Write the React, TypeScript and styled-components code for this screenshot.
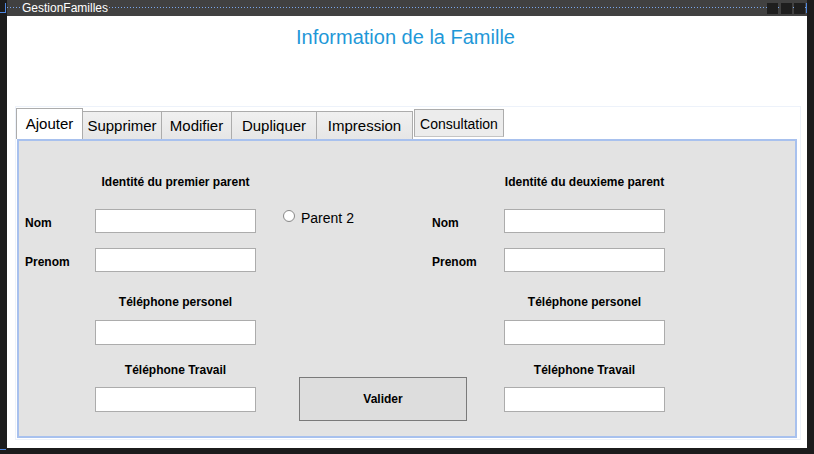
import React from 'react';
import styled, { createGlobalStyle, css } from 'styled-components';

const GlobalStyle = createGlobalStyle`
  html, body {
    margin: 0;
    padding: 0;
    background: #1c1c1c;
  }
  body {
    font-family: "Liberation Sans", Arial, sans-serif;
  }
`;

const Window = styled.div`
  display: flex;
  width: 814px;
  height: 454px;
  background: #1c1c1c;
  overflow: hidden;
`;

const SideStrip = styled.div`
  width: 7px;
  flex: none;
  display: flex;
  flex-direction: column;
  justify-content: space-between;
`;

const CornerMark = styled.div`
  width: 6px;
  height: 10px;
  margin-top: 3px;
  box-sizing: border-box;
  border-right: 1px solid #4f86dd;
  border-bottom: 1px solid #4f86dd;
`;

const BottomMark = styled.div`
  width: 6px;
  height: 1px;
  margin-bottom: 4px;
  background: #4f86dd;
`;

const Center = styled.div`
  width: 800px;
  flex: none;
  display: flex;
  flex-direction: column;
`;

const TitleBar = styled.div`
  height: 16px;
  flex: none;
  display: flex;
  align-items: center;
  background-color: #414141;
  background-image: linear-gradient(to right, #7aa7ec 50%, transparent 50%);
  background-size: 3px 1px;
  background-position: 0 7px;
  background-repeat: repeat-x;
`;

const Caption = styled.span`
  margin-left: 14px;
  padding: 0 1px;
  background: #414141;
  color: #ffffff;
  font-size: 12px;
  line-height: 16px;
`;

const WinButtons = styled.div`
  margin-left: auto;
  display: flex;
  align-items: center;
`;

const WinButton = styled.div<{ $gap: number }>`
  width: 11px;
  height: 11px;
  margin-right: ${p => p.$gap}px;
  background: #1e1e1e;
`;

const ResizeMark = styled.div`
  width: 1px;
  height: 10px;
  background: #4f86dd;
`;

const Content = styled.div`
  flex: none;
  height: 432px;
  background: #ffffff;
  display: flex;
  flex-direction: column;
`;

const BottomStrip = styled.div`
  flex: 1;
  background: #1c1c1c;
`;

const Heading = styled.h1`
  margin: 9px 0 0;
  padding-right: 3px;
  font-size: 20px;
  line-height: 24px;
  font-weight: normal;
  color: #1f98d8;
  text-align: center;
`;

const TabControl = styled.div`
  margin: 57px 0 0 8px;
  width: 786px;
  box-sizing: border-box;
  border: 1px solid #edf2fa;
  padding-bottom: 1px;
`;

const TabStrip = styled.div`
  display: flex;
  align-items: flex-end;
  height: 32px;
`;

const Tab = styled.div<{ $width: number; $active?: boolean; $small?: boolean }>`
  width: ${p => p.$width}px;
  height: 28px;
  box-sizing: border-box;
  display: flex;
  align-items: center;
  justify-content: center;
  margin-left: -1px;
  border: 1px solid #acacac;
  border-bottom: none;
  background: linear-gradient(#f0f0f0, #e6e6e6);
  color: #000;
  font-size: 15px;
  white-space: nowrap;

  &:first-child {
    margin-left: 0;
  }

  ${p =>
    p.$active &&
    css`
      height: 31px;
      padding-bottom: 2px;
      background: #ffffff;
    `}

  ${p =>
    p.$small &&
    css`
      margin-left: 1px;
      margin-bottom: 2px;
      padding-top: 2px;
      font-size: 14px;
      background: #ececec;
      border-bottom: 1px solid #c4c4c4;
    `}
`;

const Panel = styled.div`
  margin: 0 3px 0 1px;
  border: 2px solid #a8c1ee;
  background: #e3e3e3;
  padding: 33px 0 0 6px;
`;

const FormGrid = styled.div`
  display: grid;
  grid-template-columns: 70px 161px 176px 72px 161px;
  grid-template-rows: 16px 43px 39px 38px 35px 33px 34px 24px;
`;

const SectionTitle = styled.div<{ $col: number; $row: number }>`
  grid-column: ${p => p.$col};
  grid-row: ${p => p.$row};
  align-self: end;
  justify-self: center;
  white-space: nowrap;
  font-size: 12px;
  line-height: 16px;
  font-weight: bold;
  color: #000;
`;

const FieldLabel = styled.label<{ $col: number; $row: number }>`
  grid-column: ${p => p.$col};
  grid-row: ${p => p.$row};
  align-self: end;
  margin-bottom: 2px;
  font-size: 12px;
  line-height: 16px;
  font-weight: bold;
  color: #000;
`;

const Field = styled.input<{ $col: number; $row: number; $tall?: boolean }>`
  grid-column: ${p => p.$col};
  grid-row: ${p => p.$row};
  align-self: end;
  width: 161px;
  height: ${p => (p.$tall ? 25 : 24)}px;
  box-sizing: border-box;
  margin: 0;
  padding: 0 3px;
  border: 1px solid #acacac;
  background: #ffffff;
  outline: none;
  font-family: inherit;
  font-size: 12px;
`;

const RadioRow = styled.label`
  grid-column: 3;
  grid-row: 2;
  align-self: start;
  justify-self: start;
  margin: 20px 0 0 27px;
  display: flex;
  align-items: flex-start;
  gap: 6px;
`;

const RadioDot = styled.span`
  width: 12px;
  height: 12px;
  box-sizing: border-box;
  border-radius: 50%;
  border: 1px solid #8a8a8a;
  background: radial-gradient(circle at 50% 40%, #ffffff 55%, #ececec 100%);
`;

const RadioText = styled.span`
  font-size: 14px;
  line-height: 18px;
  color: #000;
  margin-top: -1px;
`;

const SubmitButton = styled.button`
  grid-column: 3 / 5;
  grid-row: 7 / 9;
  align-self: start;
  justify-self: start;
  margin: -1px 0 0 43px;
  width: 168px;
  height: 44px;
  padding: 0;
  border: 1px solid #7a7a7a;
  background: #dddddd;
  font-family: inherit;
  font-size: 12px;
  font-weight: bold;
  color: #000;
`;

const tabs = [
  { label: 'Ajouter', width: 67, active: true },
  { label: 'Supprimer', width: 80 },
  { label: 'Modifier', width: 71 },
  { label: 'Dupliquer', width: 86 },
  { label: 'Impression', width: 97 },
  { label: 'Consultation', width: 90, small: true },
];

const ParentColumn = ({ col, title }: { col: number; title: string }) => (
  <>
    <SectionTitle $col={col + 1} $row={1}>{title}</SectionTitle>
    <FieldLabel $col={col} $row={2}>Nom</FieldLabel>
    <Field $col={col + 1} $row={2} />
    <FieldLabel $col={col} $row={3}>Prenom</FieldLabel>
    <Field $col={col + 1} $row={3} />
    <SectionTitle $col={col + 1} $row={4}>Téléphone personel</SectionTitle>
    <Field $col={col + 1} $row={5} $tall />
    <SectionTitle $col={col + 1} $row={6}>Téléphone Travail</SectionTitle>
    <Field $col={col + 1} $row={7} $tall />
  </>
);

const App = () => {
  return (
    <>
      <GlobalStyle />
      <Window>
        <SideStrip>
          <CornerMark />
          <BottomMark />
        </SideStrip>
        <Center>
          <TitleBar>
            <Caption>GestionFamilles</Caption>
            <WinButtons>
              <WinButton $gap={3} />
              <WinButton $gap={2} />
              <WinButton $gap={1} />
              <ResizeMark />
            </WinButtons>
          </TitleBar>
          <Content>
            <Heading>Information de la Famille</Heading>
            <TabControl>
              <TabStrip>
                {tabs.map(t => (
                  <Tab key={t.label} $width={t.width} $active={t.active} $small={t.small}>
                    {t.label}
                  </Tab>
                ))}
              </TabStrip>
              <Panel>
                <FormGrid>
                  <ParentColumn col={1} title="Identité du premier parent" />
                  <RadioRow>
                    <RadioDot />
                    <RadioText>Parent 2</RadioText>
                  </RadioRow>
                  <ParentColumn col={4} title="Identité du deuxieme parent" />
                  <SubmitButton type="button">Valider</SubmitButton>
                </FormGrid>
              </Panel>
            </TabControl>
          </Content>
          <BottomStrip />
        </Center>
        <SideStrip />
      </Window>
    </>
  );
};

export default App;
